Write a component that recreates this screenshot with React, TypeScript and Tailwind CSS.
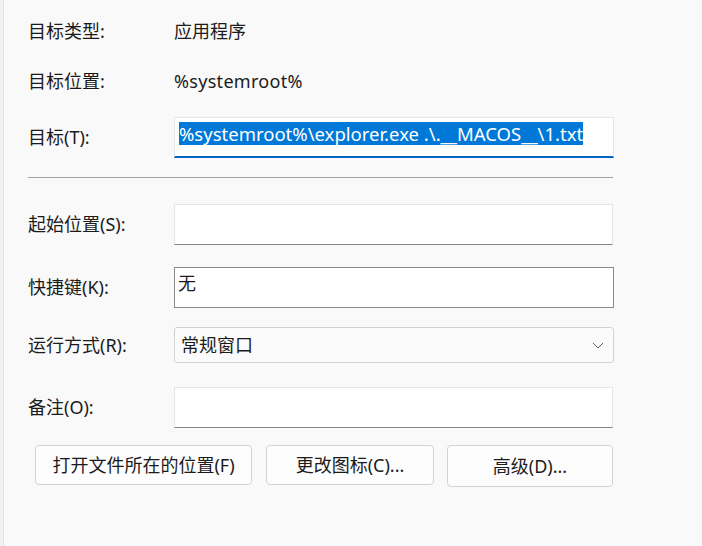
export default function App() {
  const font = {
    fontFamily: '"Noto Sans", "Noto Sans CJK SC", sans-serif',
  };

  return (
    <div
      className="flex h-[546px] w-[702px] overflow-hidden bg-[#f9f9f9] text-[18px] text-[#1b1b1b]"
      style={font}
    >
      <div className="w-[3px] bg-[#f2f2f2]" />
      <div className="w-px bg-[#e4e4e4]" />

      <div className="flex flex-1 flex-col pl-[24px] pt-[16px]">
        <div className="flex h-[30px] items-center">
          <div className="w-[146px]">目标类型:</div>
          <div>应用程序</div>
        </div>

        <div className="mt-[20px] flex h-[30px] items-center">
          <div className="w-[146px]">目标位置:</div>
          <div className="tracking-[0.3px]">%systemroot%</div>
        </div>

        <div className="mt-[21px] flex h-[41px] items-center">
          <div className="w-[146px]">目标(T):</div>
          <div className="h-[41px] w-[440px] border border-b-2 border-[#e5e5e5] border-b-[#0067c0] bg-white pl-[4px] pt-[3px]">
            <span className="inline-block h-[23px] bg-[#0078d7] text-[18.5px] leading-[23px] text-white">
              %systemroot%\explorer.exe .\.__MACOS__\1.txt
            </span>
          </div>
        </div>

        <div className="mt-[19px] h-px w-[585px] bg-[#a3a3a3]" />

        <div className="mt-[26px] flex h-[41px] items-center">
          <div className="w-[146px]">起始位置(S):</div>
          <div className="h-[41px] w-[439px] border border-[#e5e5e5] border-b-[#868686] bg-white" />
        </div>

        <div className="mt-[22px] flex h-[41px] items-center">
          <div className="w-[146px]">快捷键(K):</div>
          <div className="h-[41px] w-[440px] border border-[#8a8a8a] bg-white pl-[3px] pt-[3px] leading-[24px]">
            无
          </div>
        </div>

        <div className="mt-[19px] flex h-[36px] items-center">
          <div className="w-[146px]">运行方式(R):</div>
          <div className="flex h-[36px] w-[440px] items-center justify-between rounded-[3px] border border-[#d2d2d2] bg-[#fbfbfb] pl-[6px] pr-[9px]">
            <span>常规窗口</span>
            <svg width="12" height="7" viewBox="0 0 12 7" fill="none">
              <path d="M1 1l5 5 5-5" stroke="#5c5c5c" strokeWidth="1" />
            </svg>
          </div>
        </div>

        <div className="mt-[24px] flex h-[41px] items-center">
          <div className="w-[146px]">备注(O):</div>
          <div className="h-[41px] w-[439px] border border-[#e5e5e5] border-b-[#868686] bg-white" />
        </div>

        <div className="mt-[17px] flex items-start pl-[7px]">
          <button className="h-[40px] w-[217px] rounded-[4px] border border-[#d3d3d3] bg-[#fdfdfd]">
            打开文件所在的位置(F)
          </button>
          <button className="ml-[14px] h-[40px] w-[168px] rounded-[4px] border border-[#d3d3d3] bg-[#fdfdfd]">
            更改图标(C)...
          </button>
          <button className="ml-[13px] h-[42px] w-[166px] rounded-[4px] border border-[#d3d3d3] bg-[#fdfdfd]">
            高级(D)...
          </button>
        </div>
      </div>
    </div>
  );
}
